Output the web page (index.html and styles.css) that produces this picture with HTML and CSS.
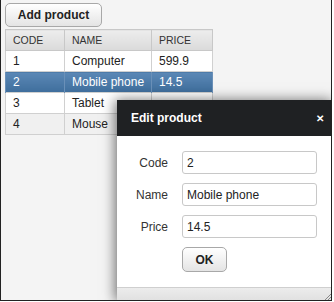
FILE: index.html
```html
<!DOCTYPE html>
<html lang="en">
<head>
<meta charset="UTF-8">
<title>Products</title>
<link rel="stylesheet" href="styles.css">
</head>
<body>
<div class="page">
<button class="button add-button">Add product</button>
<table class="grid">
<thead>
<tr>
<th class="col-code">CODE</th>
<th class="col-name">NAME</th>
<th class="col-price">PRICE</th>
</tr>
</thead>
<tbody>
<tr><td>1</td><td>Computer</td><td>599.9</td></tr>
<tr class="selected"><td>2</td><td>Mobile phone</td><td>14.5</td></tr>
<tr><td>3</td><td>Tablet</td><td></td></tr>
<tr class="alt"><td>4</td><td>Mouse</td><td></td></tr>
</tbody>
</table>

<!-- edit dialog -->
<div class="dialog">
<div class="dialog-header">
<span class="dialog-title">Edit product</span>
<span class="dialog-close">&#x2715;</span>
</div>
<div class="dialog-body">
<div class="field">
<label>Code</label>
<input type="text" value="2">
</div>
<div class="field">
<label>Name</label>
<input type="text" value="Mobile phone">
</div>
<div class="field">
<label>Price</label>
<input type="text" value="14.5">
</div>
<div class="field">
<label></label>
<button class="button ok-button">OK</button>
</div>
</div>
<div class="dialog-footer">
<svg class="grip" width="12" height="12" viewBox="0 0 12 12">
<path d="M11 3 L3 11 M11 6 L6 11 M11 9 L9 11" stroke="#888" stroke-width="1"/>
</svg>
</div>
</div>
</div>
</body>
</html>
```
FILE: styles.css
```css
body {
margin: 0;
font-family: "Liberation Sans", Arial, sans-serif;
}

.page {
position: relative;
width: 332px;
height: 301px;
padding: 3px 0 0 4px;
box-sizing: border-box;
background-color: #f4f4f4;
border-left: 1px solid #222;
border-right: 1px solid #222;
border-bottom: 1px solid #222;
overflow: hidden;
}

.button {
font-family: "Liberation Sans", Arial, sans-serif;
font-weight: bold;
font-size: 12px;
color: #222;
background: linear-gradient(#ffffff, #e4e4e4);
border: 1px solid #a8a8a8;
border-radius: 5px;
cursor: pointer;
}

.add-button {
display: block;
width: 97px;
height: 24px;
padding: 0;
margin-bottom: 2px;
}

/* product grid */
.grid {
border-collapse: collapse;
font-size: 12px;
color: #222;
}

.grid th, .grid td {
border: 1px solid #d0d0d0;
height: 20px;
padding: 0 0 0 7px;
text-align: left;
}

.grid th {
font-size: 10.5px;
font-weight: normal;
color: #333;
background: linear-gradient(#ededed, #dadada);
border-color: #c8c8c8;
}

.grid td {
background-color: #fff;
}

.col-code { width: 51px; }
.col-name { width: 79px; }
.col-price { width: 53px; }

.grid tr.alt td {
background-color: #f0f0f0;
}

.grid tr.selected td {
color: #fff;
background: linear-gradient(#5b88b6, #3f6e9c);
border-top: 1px dotted #1e3e60;
border-bottom: 1px dotted #1e3e60;
border-left-color: #6a90b8;
border-right-color: #6a90b8;
}

/* dialog */
.dialog {
position: absolute;
left: 116px;
top: 100px;
width: 217px;
height: 201px;
display: flex;
flex-direction: column;
background-color: #fff;
box-shadow: -2px 0 12px rgba(0, 0, 0, 0.55);
}

.dialog-header {
height: 36px;
display: flex;
align-items: center;
justify-content: space-between;
padding: 0 10px 0 14px;
background-color: #1f2123;
color: #fff;
}

.dialog-title {
font-weight: bold;
font-size: 12px;
}

.dialog-close {
font-size: 10px;
font-weight: bold;
}

.dialog-body {
flex: 1;
padding: 15px 0 0 0;
}

.field {
display: flex;
align-items: center;
margin-bottom: 9px;
}

.field label {
width: 51px;
text-align: right;
margin-right: 14px;
font-size: 12px;
color: #333;
}

.field input {
width: 135px;
height: 23px;
box-sizing: border-box;
padding: 0 4px;
font-family: "Liberation Sans", Arial, sans-serif;
font-size: 12px;
color: #222;
border: 1px solid #c8c8c8;
border-radius: 3px;
}

.ok-button {
width: 45px;
height: 25px;
padding: 0;
}

.dialog-footer {
height: 13px;
display: flex;
justify-content: flex-end;
align-items: flex-end;
background: linear-gradient(#ececec, #e0e0e0);
border-top: 1px solid #cfcfcf;
}

.grip {
display: block;
}
```
